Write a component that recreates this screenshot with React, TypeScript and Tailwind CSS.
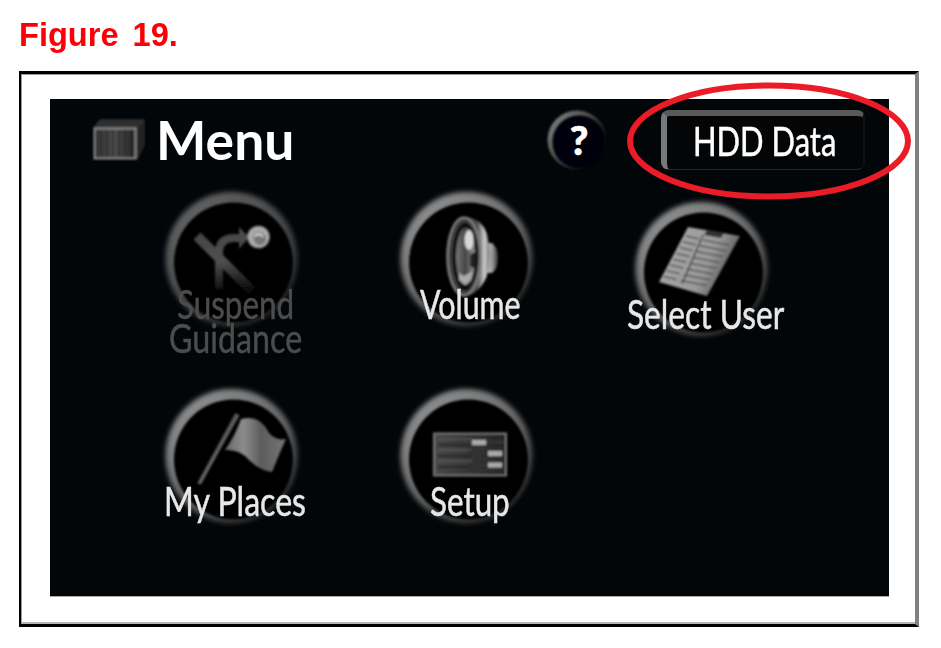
import { useLayoutEffect, useRef, useState } from 'react';
import type { ReactNode } from 'react';
import clsx from 'clsx';

type FitTextProps = {
  text: string;
  width: number;
  className?: string;
};

// Condenses a line of text horizontally so it fills the given width
function FitText({ text, width, className }: FitTextProps) {
  const ref = useRef<HTMLSpanElement>(null);
  const [scale, setScale] = useState(1);

  useLayoutEffect(() => {
    if (ref.current) setScale(width / ref.current.offsetWidth);
  }, [text, width]);

  return (
    <span className="block" style={{ width }}>
      <span
        ref={ref}
        className={clsx("inline-block origin-left whitespace-nowrap align-top", className)}
        style={{ transform: `scaleX(${scale})` }}
      >
        {text}
      </span>
    </span>
  );
}

function GuidanceIcon() {
  return (
    <g filter="url(#soft)">
      <path d="M37 47L92 102" stroke="url(#road)" strokeWidth="10" />
      <path d="M59 100V64q0-15 15-15h12" fill="none" stroke="url(#road)" strokeWidth="8" />
      <path d="M79 38l10 10-10 12z" fill="#484848" />
      <circle cx="98.500" cy="48" r="11.500" fill="url(#ball)" />
      <circle cx="100" cy="50" r="6" fill="#777" />
      <path d="M95 47q5-4 8 1" stroke="#d0d0d0" strokeWidth="2" fill="none" />
    </g>
  );
}

function VolumeIcon() {
  return (
    <g filter="url(#soft)">
      <path d="M88 54h9q6 4 6 15t-6 15h-9z" fill="url(#magnet)" />
      <path d="M69 28q17 0 23 17 5 20 0 42-8 19-23 20z" fill="url(#cone)" />
      <ellipse cx="69" cy="67.500" rx="16.500" ry="39" fill="#3c3c3c" stroke="#7c7c7c" strokeWidth="2.500" />
      <ellipse cx="70" cy="67.500" rx="12.500" ry="34" fill="#090909" />
      <ellipse cx="70.500" cy="67.500" rx="9.500" ry="29" fill="url(#inner)" />
      <ellipse cx="74" cy="51" rx="4.500" ry="10" fill="#d8d8d8" />
      <path d="M64 84l5 3 9-5-2 9-6 5-6-5z" fill="#aaa" />
      <path d="M75 66l5-3v17l-5-3z" fill="#222" />
    </g>
  );
}

function ListIcon() {
  const rows = [0, 1, 2, 3, 4, 5, 6, 7];
  return (
    <g filter="url(#soft)">
      <path d="M58 28l52 9-33 60-48-14z" fill="url(#paper)" />
      <path d="M77 31l17 3-3 5-17-3z" fill="#333" />
      {rows.map((row) => (
        <path
          key={row}
          d="M56 37l13 3M73 41l26 5"
          transform={`translate(${row * -3.2} ${row * 5.8})`}
          stroke="#555"
          strokeWidth="1.500"
        />
      ))}
      <path d="M73 36L52 85" stroke="#444" strokeWidth="1.500" />
    </g>
  );
}

function FlagIcon() {
  return (
    <g filter="url(#soft)">
      <path d="M77 28L39 98" stroke="#555" strokeWidth="4" />
      <path d="M79 29L40 97" stroke="#808080" strokeWidth="1" />
      <path d="M81 33q11-3 18 2 6 4 10 12 7 8 17 6-6 13-14 33-13-2-23-12-9-11-24-10 9-12 16-31z" fill="url(#flag)" />
    </g>
  );
}

function SetupIcon() {
  return (
    <g filter="url(#soft)">
      <rect x="39" y="47.500" width="72" height="42" fill="url(#panel)" stroke="#777" strokeWidth="2" />
      <path d="M43 59h34M43 70h34M43 81h34" stroke="#282828" strokeWidth="2" />
      <path d="M43 53h34M43 64h34M43 75h34" stroke="#666" strokeWidth="1" />
      <path d="M92 56h16M74 66h15M74 79h15" stroke="#333" strokeWidth="4" />
      <path d="M74 62h34M74 73h34M74 84h34" stroke="#333" strokeWidth="1.500" />
      <path d="M77 56.500h14M93 67.500h14M93 79h14" stroke="#aaa" strokeWidth="5" />
    </g>
  );
}

type MenuItem = {
  id: string;
  lines: { text: string; width: number }[];
  icon: ReactNode;
  disabled?: boolean;
  className?: string;
};

const items: MenuItem[] = [
  {
    id: "suspend",
    lines: [
      { text: "Suspend", width: 117 },
      { text: "Guidance", width: 133 },
    ],
    icon: <GuidanceIcon />,
    disabled: true,
  },
  { id: "volume", lines: [{ text: "Volume", width: 101 }], icon: <VolumeIcon /> },
  { id: "user", lines: [{ text: "Select User", width: 157 }], icon: <ListIcon />, className: "pt-2.5" },
  { id: "places", lines: [{ text: "My Places", width: 142 }], icon: <FlagIcon /> },
  { id: "setup", lines: [{ text: "Setup", width: 80 }], icon: <SetupIcon /> },
];

// Gradients and filters shared by all the icons
function Defs() {
  return (
    <svg className="absolute h-0 w-0">
      <defs>
        <filter id="soft" x="-20%" y="-20%" width="140%" height="140%">
          <feGaussianBlur stdDeviation="0.8" />
        </filter>
        <filter id="glow" x="-20%" y="-20%" width="140%" height="140%">
          <feGaussianBlur stdDeviation="2.8" />
        </filter>
        <linearGradient id="ring" x1="0.2" y1="0.1" x2="0.8" y2="0.9">
          <stop offset="0" stopColor="#8c8c8c" />
          <stop offset="0.5" stopColor="#666" />
          <stop offset="1" stopColor="#303030" />
        </linearGradient>
        <linearGradient id="ringDim" x1="0.2" y1="0.1" x2="0.8" y2="0.9">
          <stop offset="0" stopColor="#606060" />
          <stop offset="0.5" stopColor="#484848" />
          <stop offset="1" stopColor="#282828" />
        </linearGradient>
        <linearGradient id="road" gradientUnits="userSpaceOnUse" x1="60" y1="40" x2="66" y2="104">
          <stop offset="0" stopColor="#444" />
          <stop offset="0.5" stopColor="#505050" />
          <stop offset="1" stopColor="#080808" />
        </linearGradient>
        <radialGradient id="ball">
          <stop offset="0" stopColor="#888" />
          <stop offset="0.8" stopColor="#b0b0b0" />
          <stop offset="1" stopColor="#666" />
        </radialGradient>
        <linearGradient id="cone">
          <stop offset="0.5" stopColor="#444" />
          <stop offset="0.8" stopColor="#ccc" />
          <stop offset="1" stopColor="#777" />
        </linearGradient>
        <linearGradient id="magnet">
          <stop offset="0" stopColor="#ddd" />
          <stop offset="0.6" stopColor="#999" />
          <stop offset="1" stopColor="#333" />
        </linearGradient>
        <linearGradient id="inner">
          <stop offset="0" stopColor="#777" />
          <stop offset="0.5" stopColor="#444" />
          <stop offset="1" stopColor="#999" />
        </linearGradient>
        <linearGradient id="paper" x1="0" y1="0" x2="1" y2="0.4">
          <stop offset="0" stopColor="#aaa" />
          <stop offset="0.7" stopColor="#999" />
          <stop offset="1" stopColor="#555" />
        </linearGradient>
        <linearGradient id="flag">
          <stop offset="0" stopColor="#666" />
          <stop offset="0.3" stopColor="#8c8c8c" />
          <stop offset="0.6" stopColor="#5c5c5c" />
          <stop offset="1" stopColor="#777" />
        </linearGradient>
        <linearGradient id="panel">
          <stop offset="0" stopColor="#484848" />
          <stop offset="1" stopColor="#222" />
        </linearGradient>
        <linearGradient id="box">
          <stop offset="0" stopColor="#303030" />
          <stop offset="0.5" stopColor="#4c4c4c" />
          <stop offset="1" stopColor="#222" />
        </linearGradient>
        <linearGradient id="help" x1="0" y1="0.2" x2="0.8" y2="0.8">
          <stop offset="0" stopColor="#808080" />
          <stop offset="0.5" stopColor="#484848" />
          <stop offset="1" stopColor="#080a0c" />
        </linearGradient>
      </defs>
    </svg>
  );
}

function MenuButton({ item }: { item: MenuItem }) {
  return (
    <button className={clsx("flex h-[197px] flex-col items-center", item.className)}>
      <svg className="h-[140px] w-[140px] shrink-0 overflow-visible" viewBox="0 0 140 140">
        <ellipse cx="69.500" cy="71" rx="66" ry="67" fill={item.disabled ? "url(#ringDim)" : "url(#ring)"} filter="url(#glow)" />
        <ellipse cx="71.500" cy="74.500" rx="59.500" ry="60" fill="#020406" filter="url(#soft)" />
        <g transform="translate(-2 1)">{item.icon}</g>
      </svg>
      <span
        className={clsx(
          "relative -mt-[41px] flex flex-col items-center pl-[7px] text-[40px] leading-[34px]",
          item.disabled ? "text-[#4c4c4c]" : "text-[#e8e8e8]"
        )}
      >
        {item.lines.map((line) => (
          <FitText
            key={line.text}
            text={line.text}
            width={line.width}
            className="[-webkit-text-stroke:0.5px_currentColor]"
          />
        ))}
      </span>
    </button>
  );
}

export default function App() {
  return (
    <div className="h-[648px] w-[941px] overflow-hidden bg-white pl-[19px] font-[Lato,sans-serif]">
      <Defs />
      <h1 className="h-[71px] pt-[17px] font-['Liberation_Sans',sans-serif] font-bold leading-9 text-[#fb0007]">
        <FitText text="Figure 19." width={159} className="text-[33px] [word-spacing:5px]" />
      </h1>

      <div className="h-[556px] w-[900px] border-y-[3px] border-l-2 border-r-4 border-black border-r-[#808080] bg-white pl-[29px] pt-[25px] shadow-[inset_1px_1px_0_#999,inset_0_-2px_0_#b5b5b5]">
        <div className="relative h-[497px] w-[839px] bg-[#020609] shadow-[0_1px_0_#aaa]">
          <header className="flex h-[89px] items-start pl-[42px]">
            <svg className="mt-[18px] h-11 w-[54px]" viewBox="0 0 54 44">
              <g filter="url(#soft)">
                <path d="M1 11l7-9h44v25l-7 15z" fill="#2c2c2c" />
                <path d="M45 11l7-8v25l-7 14z" fill="#202020" stroke="#333" />
                <path d="M4 8h43M6 5h44" stroke="#3a3a3a" />
                <rect x="2.500" y="11.500" width="41" height="30" fill="url(#box)" stroke="#8a8a8a" strokeWidth="2" />
                <path d="M9 13v27M15 13v27M21 13v27M27 13v27M33 13v27M39 13v27" stroke="#222" />
              </g>
            </svg>
            <div className="ml-[10px] mt-[14px] text-white">
              <FitText text="Menu" width={138} className="text-[53px] font-bold leading-[54px]" />
            </div>
            <button className="relative ml-[251px] mt-[10px] h-[62px] w-[62px]">
              <svg className="absolute inset-0" viewBox="0 0 62 62">
                <circle cx="32" cy="31" r="29.500" fill="url(#help)" filter="url(#soft)" />
                <circle cx="34" cy="33" r="26.500" fill="#030507" filter="url(#soft)" />
              </svg>
              <span className="relative flex h-full items-center justify-center pl-1.5 text-[40px] font-black leading-none text-white [-webkit-text-stroke:0.6px_white]">
                ?
              </span>
            </button>
            <button className="ml-[54px] mt-[11px] h-[60px] w-[204px] rounded-lg border-b border-l-[6px] border-r-2 border-t-[6px] border-b-[#24282a] border-l-[#777] border-r-[#0d1114] border-t-[#5a5a5a] bg-[#030507] pl-[26px] text-left text-white">
              <FitText text="HDD Data" width={143} className="-mt-1 text-[40px] leading-[48px] [-webkit-text-stroke:0.5px_currentColor]" />
            </button>
          </header>

          <main className="ml-16 grid grid-cols-[235px_235px_236px]">
            {items.map((item) => (
              <MenuButton key={item.id} item={item} />
            ))}
          </main>

          {/* Red callout around the HDD Data button */}
          <svg className="absolute -top-[18px] left-[576px] h-[120px] w-[288px]" viewBox="0 0 288 120">
            <ellipse cx="143" cy="60" rx="139" ry="55.500" fill="none" stroke="#ea1c27" strokeWidth="6" />
          </svg>
        </div>
      </div>
    </div>
  );
}
